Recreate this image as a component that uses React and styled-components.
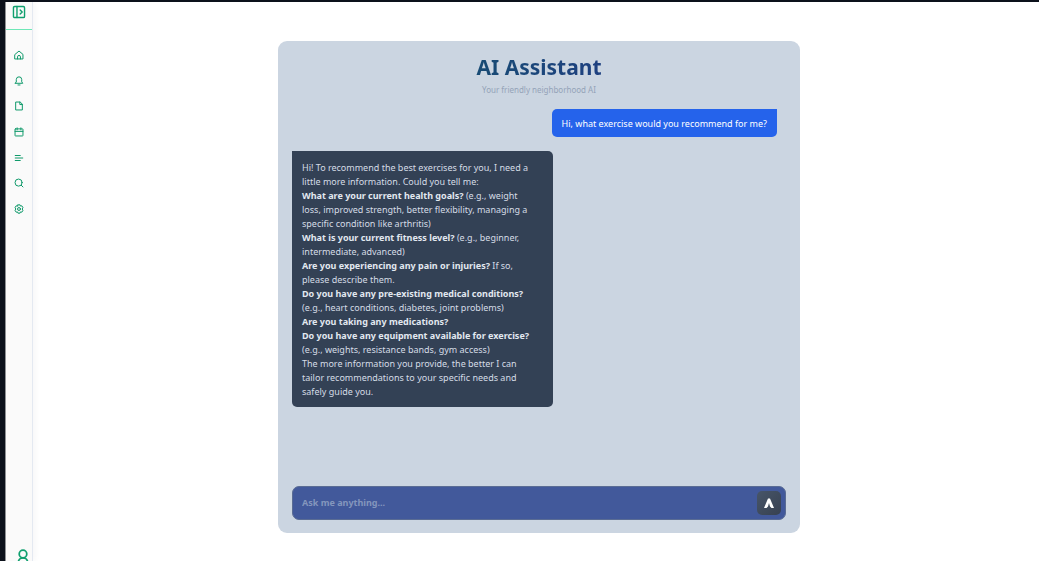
import React from "react";
import styled, { createGlobalStyle } from "styled-components";

const GlobalStyle = createGlobalStyle`
  *, *::before, *::after { box-sizing: border-box; }
  body {
    margin: 0;
    background: #ffffff;
    font-family: "Noto Sans", sans-serif;
    font-size: 9px;
    line-height: 14px;
  }
`;

const Page = styled.div`
  display: flex;
  height: 100vh;
  overflow: hidden;
  border-top: 2px solid #0c111b;
  border-left: 5px solid #0c111b;
`;

const Sidebar = styled.aside`
  display: flex;
  flex-direction: column;
  flex: none;
  width: 28px;
  background: #fafafa;
  border-left: 1px solid #8f9194;
  border-right: 1px solid #e4e9f1;
  box-shadow: 2px 0 6px rgba(15, 23, 42, 0.04);
`;

const SidebarHeader = styled.div`
  display: flex;
  justify-content: center;
  height: 28px;
  padding-top: 3px;
  border-bottom: 1px solid #6ee7b7;
`;

const IconButton = styled.button`
  display: flex;
  align-items: center;
  justify-content: center;
  width: 14px;
  height: 14px;
  padding: 0;
  border: 0;
  background: none;
  color: #0f9f6e;
  cursor: pointer;
`;

const NavList = styled.ul`
  display: flex;
  flex-direction: column;
  align-items: center;
  justify-content: space-between;
  height: 168px;
  margin: 18px 0 0;
  padding: 0;
  list-style: none;
`;

const NavLink = styled.a`
  display: flex;
  align-items: center;
  justify-content: center;
  width: 14px;
  height: 14px;
  color: #109a6b;
`;

const SidebarFooter = styled.div`
  display: flex;
  justify-content: flex-end;
  height: 12px;
  margin-top: auto;
  padding-right: 2px;
`;

const Main = styled.main`
  flex: 1;
  min-width: 0;
  display: flex;
  justify-content: center;
  padding: 39px 0 28px 6px;
`;

const Card = styled.section`
  display: flex;
  flex-direction: column;
  width: 100%;
  max-width: 522px;
  padding: 13px 14px;
  border-radius: 9px;
  background: #cbd5e1;
`;

const Header = styled.header`
  margin-bottom: 12px;
  text-align: center;
`;

const Title = styled.h1`
  width: fit-content;
  margin: 0 auto;
  font-size: 21px;
  line-height: 26px;
  font-weight: 700;
  color: transparent;
  background: linear-gradient(90deg, #184b74, #1e4080);
  background-clip: text;
`;

const Subtitle = styled.p`
  margin: 3px 0 0;
  font-size: 8px;
  line-height: 14px;
  color: #94a3b8;
`;

const Messages = styled.div`
  flex: 1;
  min-height: 0;
  display: flex;
  flex-direction: column;
  gap: 14px;
  padding-right: 9px;
`;

const UserMessage = styled.div`
  align-self: flex-end;
  padding: 8px 10px 6px;
  border-radius: 5px 0 5px 5px;
  background: #2563eb;
  color: #ffffff;
`;

const BotMessage = styled.div`
  align-self: flex-start;
  width: 261px;
  max-width: 100%;
  padding: 10px 20px 8px 10px;
  border-radius: 0 5px 5px 5px;
  background: #334155;
  color: #d5dce6;

  p {
    margin: 0;
  }

  strong {
    font-weight: 700;
    color: #e2e8f0;
  }
`;

const Composer = styled.form`
  display: flex;
  align-items: center;
  height: 34px;
  padding: 0 4px 0 9px;
  border: 1px solid #5a6c94;
  border-radius: 7px;
  background: #42599b;
`;

const Input = styled.input`
  flex: 1;
  min-width: 0;
  padding: 0;
  border: 0;
  outline: 0;
  background: none;
  font: inherit;
  font-weight: 700;
  color: #e2e8f0;

  &::placeholder {
    color: #8496bd;
    opacity: 1;
  }
`;

const SendButton = styled.button`
  display: flex;
  align-items: center;
  justify-content: center;
  width: 24px;
  height: 24px;
  padding: 0;
  border: 0;
  border-radius: 5px;
  background: linear-gradient(135deg, #475569, #374151);
  color: #ffffff;
  cursor: pointer;
`;

const Line = ({ children, size = 10, width = 2.4 }) => (
  <svg
    width={size}
    height={size}
    viewBox="0 0 24 24"
    fill="none"
    stroke="currentColor"
    strokeWidth={width}
    strokeLinecap="round"
    strokeLinejoin="round"
    aria-hidden="true"
  >
    {children}
  </svg>
);

const PanelIcon = () => (
  <Line size={14} width={2.4}>
    <rect x="2.500" y="2.500" width="19" height="19" rx="2" />
    <path d="M8.500 2.500v19M14 8.500l3.500 3.500-3.500 3.500" />
  </Line>
);

const HomeIcon = () => (
  <Line>
    <path d="M2.500 10.500 12 2.500l9.500 8V21.500h-19z" />
    <path d="M8.500 21.500v-5a3.500 3.500 0 0 1 7 0v5" />
  </Line>
);

const BellIcon = () => (
  <Line>
    <path d="M3 17.500h18L18.500 14V8.500a6.500 6.500 0 0 0-13 0V14z" />
    <path d="M9.500 21.500h5" />
  </Line>
);

const FileIcon = () => (
  <Line>
    <path d="M14 2.500H4v19h16V8.500z" />
    <path d="M14 2.500v6h6" />
  </Line>
);

const CalendarIcon = () => (
  <Line>
    <rect x="2.500" y="4.500" width="19" height="17" rx="1" />
    <path d="M2.500 10.500h19M7.500 2v5M16.500 2v5" />
  </Line>
);

const ListIcon = () => (
  <Line>
    <path d="M3 6h12M3 12h18M3 18h12" />
  </Line>
);

const SearchIcon = () => (
  <Line>
    <circle cx="11" cy="11" r="8.500" />
    <path d="m17.500 17.500 4 4" />
  </Line>
);

const GearIcon = () => (
  <Line>
    <path d="M9.500 2h5l1 3 3.500-.6 2.500 4.500-2 3.100 2 3.100-2.500 4.500-3.500-.6-1 3h-5l-1-3-3.500.6-2.500-4.500 2-3.100-2-3.100L5 4.400l3.500.6z" />
    <circle cx="12" cy="12" r="3.500" />
  </Line>
);

const AccountIcon = () => (
  <Line size={14} width={3}>
    <circle cx="12" cy="8.500" r="6.500" />
    <path d="M4 23a8 8 0 0 1 16 0" />
  </Line>
);

const navItems = [
  { label: "Home", icon: <HomeIcon /> },
  { label: "Notifications", icon: <BellIcon /> },
  { label: "Documents", icon: <FileIcon /> },
  { label: "Calendar", icon: <CalendarIcon /> },
  { label: "Activity", icon: <ListIcon /> },
  { label: "Search", icon: <SearchIcon /> },
  { label: "Settings", icon: <GearIcon /> },
];

export default function App() {
  return (
    <>
      <GlobalStyle />
      <Page>
        <Sidebar>
          <SidebarHeader>
            <IconButton type="button" aria-label="Open sidebar">
              <PanelIcon />
            </IconButton>
          </SidebarHeader>
          <nav aria-label="Main">
            <NavList>
              {navItems.map(({ label, icon }) => (
                <li key={label}>
                  <NavLink href="#" aria-label={label}>
                    {icon}
                  </NavLink>
                </li>
              ))}
            </NavList>
          </nav>
          <SidebarFooter>
            <IconButton type="button" aria-label="Account">
              <AccountIcon />
            </IconButton>
          </SidebarFooter>
        </Sidebar>
        <Main>
          <Card>
            <Header>
              <Title>AI Assistant</Title>
              <Subtitle>Your friendly neighborhood AI</Subtitle>
            </Header>
            <Messages>
              <UserMessage>Hi, what exercise would you recommend for me?</UserMessage>
              <BotMessage>
                <p>
                  Hi! To recommend the best exercises for you, I need a little more
                  information. Could you tell me:
                </p>
                <p>
                  <strong>What are your current health goals?</strong> (e.g., weight
                  loss, improved strength, better flexibility, managing a specific
                  condition like arthritis)
                </p>
                <p>
                  <strong>What is your current fitness level?</strong> (e.g.,
                  beginner, intermediate, advanced)
                </p>
                <p>
                  <strong>Are you experiencing any pain or injuries?</strong> If so,
                  please describe them.
                </p>
                <p>
                  <strong>Do you have any pre-existing medical conditions?</strong>{" "}
                  (e.g., heart conditions, diabetes, joint problems)
                </p>
                <p>
                  <strong>Are you taking any medications?</strong>
                </p>
                <p>
                  <strong>Do you have any equipment available for exercise?</strong>{" "}
                  (e.g., weights, resistance bands, gym access)
                </p>
                <p>
                  The more information you provide, the better I can tailor
                  recommendations to your specific needs and safely guide you.
                </p>
              </BotMessage>
            </Messages>
            <Composer onSubmit={(event) => event.preventDefault()}>
              <Input
                type="text"
                aria-label="Message"
                placeholder="Ask me anything..."
              />
              <SendButton type="submit" aria-label="Send">
                <svg width="12" height="12" viewBox="0 0 12 12" aria-hidden="true">
                  <path
                    d="M5 1.500h2L11 11H8.500L7 9.500 6 6 5 9.500 3.500 11H1z"
                    fill="currentColor"
                  />
                </svg>
              </SendButton>
            </Composer>
          </Card>
        </Main>
      </Page>
    </>
  );
}
